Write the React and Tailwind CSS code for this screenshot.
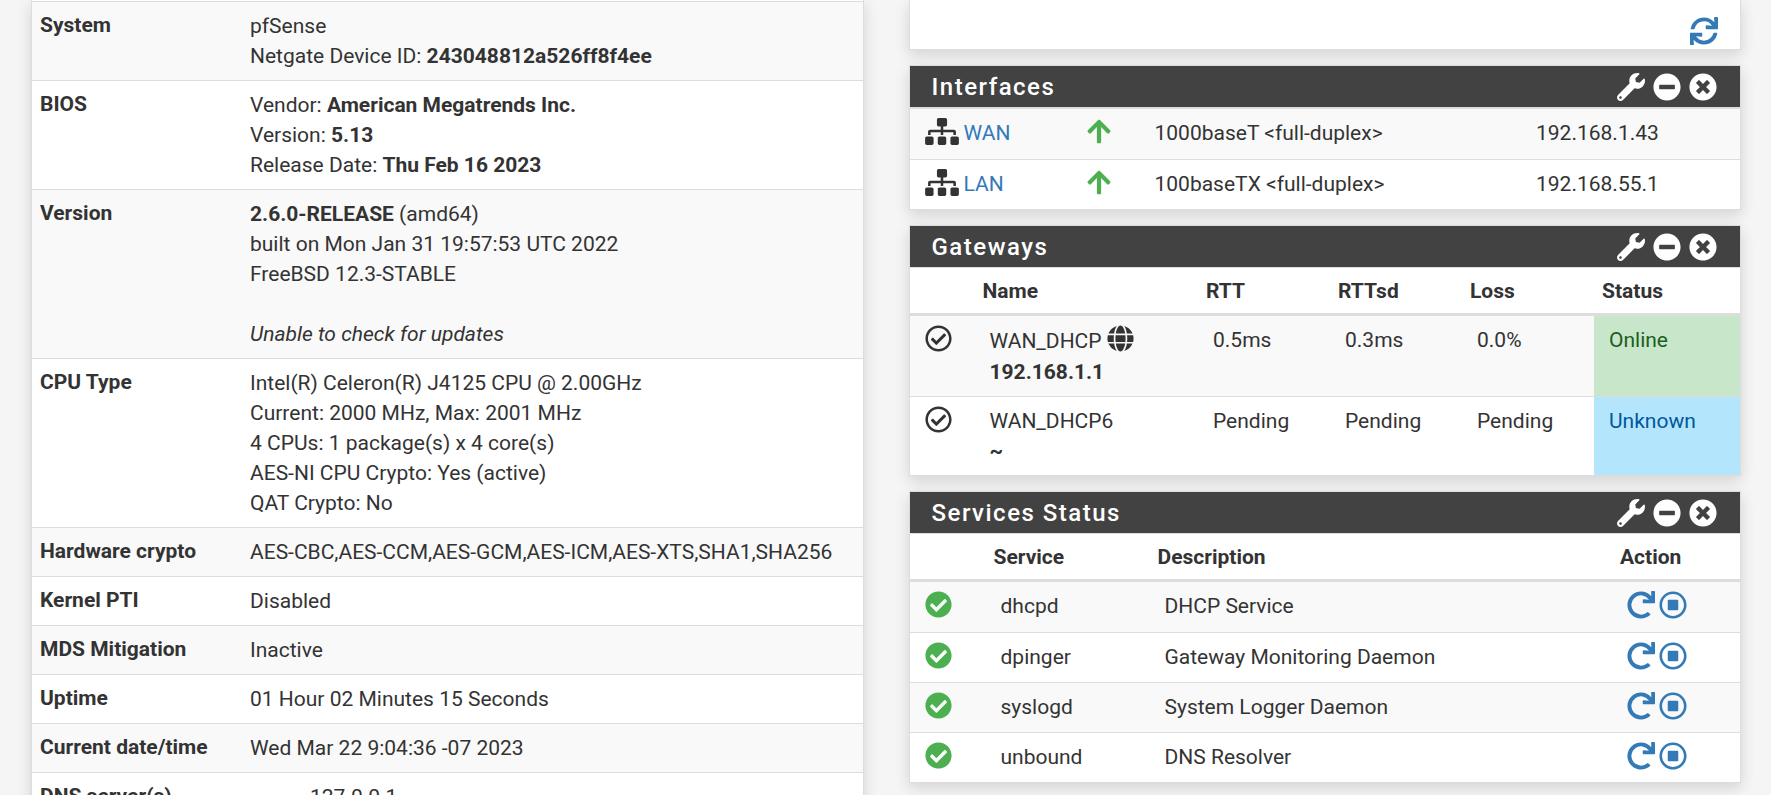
import {
  FaArrowUp,
  FaCheckCircle,
  FaGlobe,
  FaMinusCircle,
  FaRedo,
  FaRegCheckCircle,
  FaRegStopCircle,
  FaSitemap,
  FaSync,
  FaTimesCircle,
  FaWrench,
} from "react-icons/fa";

const interfaces = [
  { name: "WAN", media: "1000baseT <full-duplex>", ip: "192.168.1.43" },
  { name: "LAN", media: "100baseTX <full-duplex>", ip: "192.168.55.1" },
];

const gateways = [
  {
    name: "WAN_DHCP",
    address: "192.168.1.1",
    isDefault: true,
    rtt: "0.5ms",
    rttsd: "0.3ms",
    loss: "0.0%",
    status: "Online",
    statusClass: "bg-[#c8e6c9] text-[#1b5e20]",
  },
  {
    name: "WAN_DHCP6",
    address: "~",
    isDefault: false,
    rtt: "Pending",
    rttsd: "Pending",
    loss: "Pending",
    status: "Unknown",
    statusClass: "bg-[#b3e5fc] text-[#01579b]",
  },
];

const services = [
  { name: "dhcpd", description: "DHCP Service" },
  { name: "dpinger", description: "Gateway Monitoring Daemon" },
  { name: "syslogd", description: "System Logger Daemon" },
  { name: "unbound", description: "DNS Resolver" },
];

const panelShadow = "shadow-[0_5px_14px_rgba(0,0,0,0.14)]";
const cell = "px-[15px] py-[9px] align-top";
const headCell = "px-2 pt-2 pb-[7px] text-left align-top font-bold border-b-3 border-[#ddd]";

function InfoRow({ label, children }) {
  return (
    <tr className="odd:bg-[#f9f9f9]">
      <th
        scope="row"
        className="w-[210px] border-t border-[#ddd] px-2 pt-2 pb-[10px] text-left align-top font-bold"
      >
        {label}
      </th>
      <td className="border-t border-[#ddd] px-2 py-[9px] align-top">
        {children}
      </td>
    </tr>
  );
}

function SystemInformation() {
  return (
    <section className={`border-x border-[#ddd] bg-white pt-px ${panelShadow}`}>
      <table className="w-full table-fixed border-separate border-spacing-0">
        <tbody>
          <InfoRow label="System">
            pfSense
            <br />
            Netgate Device ID: <strong>243048812a526ff8f4ee</strong>
          </InfoRow>
          <InfoRow label="BIOS">
            Vendor: <strong>American Megatrends Inc.</strong>
            <br />
            Version: <strong>5.13</strong>
            <br />
            Release Date: <strong>Thu Feb 16 2023</strong>
          </InfoRow>
          <InfoRow label="Version">
            <strong>2.6.0-RELEASE</strong> (amd64)
            <br />
            built on Mon Jan 31 19:57:53 UTC 2022
            <br />
            FreeBSD 12.3-STABLE
            <br />
            <br />
            <em>Unable to check for updates</em>
          </InfoRow>
          <InfoRow label="CPU Type">
            Intel(R) Celeron(R) J4125 CPU @ 2.00GHz
            <br />
            Current: 2000 MHz, Max: 2001 MHz
            <br />
            4 CPUs: 1 package(s) x 4 core(s)
            <br />
            AES-NI CPU Crypto: Yes (active)
            <br />
            QAT Crypto: No
          </InfoRow>
          <InfoRow label="Hardware crypto">
            AES-CBC,AES-CCM,AES-GCM,AES-ICM,AES-XTS,SHA1,SHA256
          </InfoRow>
          <InfoRow label="Kernel PTI">Disabled</InfoRow>
          <InfoRow label="MDS Mitigation">Inactive</InfoRow>
          <InfoRow label="Uptime">01 Hour 02 Minutes 15 Seconds</InfoRow>
          <InfoRow label="Current date/time">
            Wed Mar 22 9:04:36 -07 2023
          </InfoRow>
          <InfoRow label="DNS server(s)">
            <ul className="pl-[60px]">
              <li>127.0.0.1</li>
            </ul>
          </InfoRow>
        </tbody>
      </table>
    </section>
  );
}

function Panel({ title, children }) {
  return (
    <section className={`border border-[#ddd] bg-white ${panelShadow}`}>
      <div className="flex h-[42px] items-center justify-between border-b border-[#ddd] bg-[#424242] pr-[23px] pl-[22px] text-white">
        <h2 className="text-2xl font-medium tracking-[1.5px]">{title}</h2>
        <div className="flex gap-2 text-[28px]">
          <a href="#settings" aria-label={`${title} settings`}>
            <FaWrench />
          </a>
          <a href="#collapse" aria-label={`Collapse ${title}`}>
            <FaMinusCircle />
          </a>
          <a href="#close" aria-label={`Close ${title}`}>
            <FaTimesCircle />
          </a>
        </div>
      </div>
      {children}
    </section>
  );
}

function InterfacesPanel() {
  return (
    <Panel title="Interfaces">
      <table className="h-[101px] w-full table-fixed border-separate border-spacing-0">
        <colgroup>
          <col className="w-[162px]" />
          <col className="w-[68px]" />
          <col />
          <col className="w-[219px]" />
        </colgroup>
        <tbody>
          {interfaces.map((item) => (
            <tr key={item.name} className="odd:bg-[#f9f9f9] *:border-t *:border-[#ddd]">
              <td className={cell}>
                <div className="flex gap-[5px] leading-[31px]">
                  <FaSitemap className="h-[27px] w-[34px]" />
                  <a href="#interface" className="text-[#337ab7]">
                    {item.name}
                  </a>
                </div>
              </td>
              <td className={cell}>
                <FaArrowUp className="h-[27px] w-[24px] text-[#4caf50]" />
              </td>
              <td className={cell}>{item.media}</td>
              <td className={cell}>{item.ip}</td>
            </tr>
          ))}
        </tbody>
      </table>
    </Panel>
  );
}

function GatewaysPanel() {
  return (
    <Panel title="Gateways">
      <table className="w-full table-fixed border-separate border-spacing-0">
        <colgroup>
          <col className="w-[65px]" />
          <col />
          <col className="w-[132px]" />
          <col className="w-[132px]" />
          <col className="w-[132px]" />
          <col className="w-[146px]" />
        </colgroup>
        <thead>
          <tr>
            <th className={headCell}></th>
            <th className={headCell}>Name</th>
            <th className={headCell}>RTT</th>
            <th className={headCell}>RTTsd</th>
            <th className={headCell}>Loss</th>
            <th className={headCell}>Status</th>
          </tr>
        </thead>
        <tbody>
          {gateways.map((gw) => (
            <tr
              key={gw.name}
              className="odd:bg-[#f9f9f9] not-first:*:border-t not-first:*:border-[#ddd]"
            >
              <td className={cell}>
                <FaRegCheckCircle className="text-[27px]" />
              </td>
              <td className={cell}>
                {gw.isDefault ? (
                  <div className="flex gap-[5px] leading-8">
                    {gw.name}
                    <FaGlobe className="text-[27px]" />
                  </div>
                ) : (
                  <div>{gw.name}</div>
                )}
                <strong>{gw.address}</strong>
              </td>
              <td className={cell}>{gw.rtt}</td>
              <td className={cell}>{gw.rttsd}</td>
              <td className={cell}>{gw.loss}</td>
              <td className={`${cell} ${gw.statusClass}`}>{gw.status}</td>
            </tr>
          ))}
        </tbody>
      </table>
    </Panel>
  );
}

function ServicesPanel() {
  return (
    <Panel title="Services Status">
      <table className="w-full table-fixed border-separate border-spacing-0">
        <colgroup>
          <col className="w-[76px]" />
          <col className="w-[164px]" />
          <col />
          <col className="w-[128px]" />
        </colgroup>
        <thead>
          <tr>
            <th className={headCell}></th>
            <th className={headCell}>Service</th>
            <th className={headCell}>Description</th>
            <th className={headCell}>Action</th>
          </tr>
        </thead>
        <tbody>
          {services.map((service) => (
            <tr
              key={service.name}
              className="h-[50px] odd:bg-[#f9f9f9] not-first:*:border-t not-first:*:border-[#ddd]"
            >
              <td className={cell}>
                <FaCheckCircle className="text-[27px] text-[#4caf50]" />
              </td>
              <td className={cell}>{service.name}</td>
              <td className={cell}>{service.description}</td>
              <td className={cell}>
                <div className="flex gap-1 text-[28px] text-[#337ab7]">
                  <a href="#restart" aria-label={`Restart ${service.name}`}>
                    <FaRedo />
                  </a>
                  <a href="#stop" aria-label={`Stop ${service.name}`}>
                    <FaRegStopCircle />
                  </a>
                </div>
              </td>
            </tr>
          ))}
        </tbody>
      </table>
    </Panel>
  );
}

export default function App() {
  return (
    <main className="grid min-h-screen grid-cols-2 items-start gap-[45px] bg-[#f5f5f5] pr-[30px] pl-[31px] font-[Roboto,sans-serif] text-[21px] leading-[30px] text-[#333]">
      <SystemInformation />
      <div className="flex flex-col gap-[15px]">
        <section
          className={`flex justify-end border-x border-b border-[#ddd] bg-white pt-[17px] pr-[22px] pb-1 ${panelShadow}`}
        >
          <a href="#refresh" aria-label="Refresh" className="text-[28px] text-[#337ab7]">
            <FaSync />
          </a>
        </section>
        <InterfacesPanel />
        <GatewaysPanel />
        <ServicesPanel />
      </div>
    </main>
  );
}
